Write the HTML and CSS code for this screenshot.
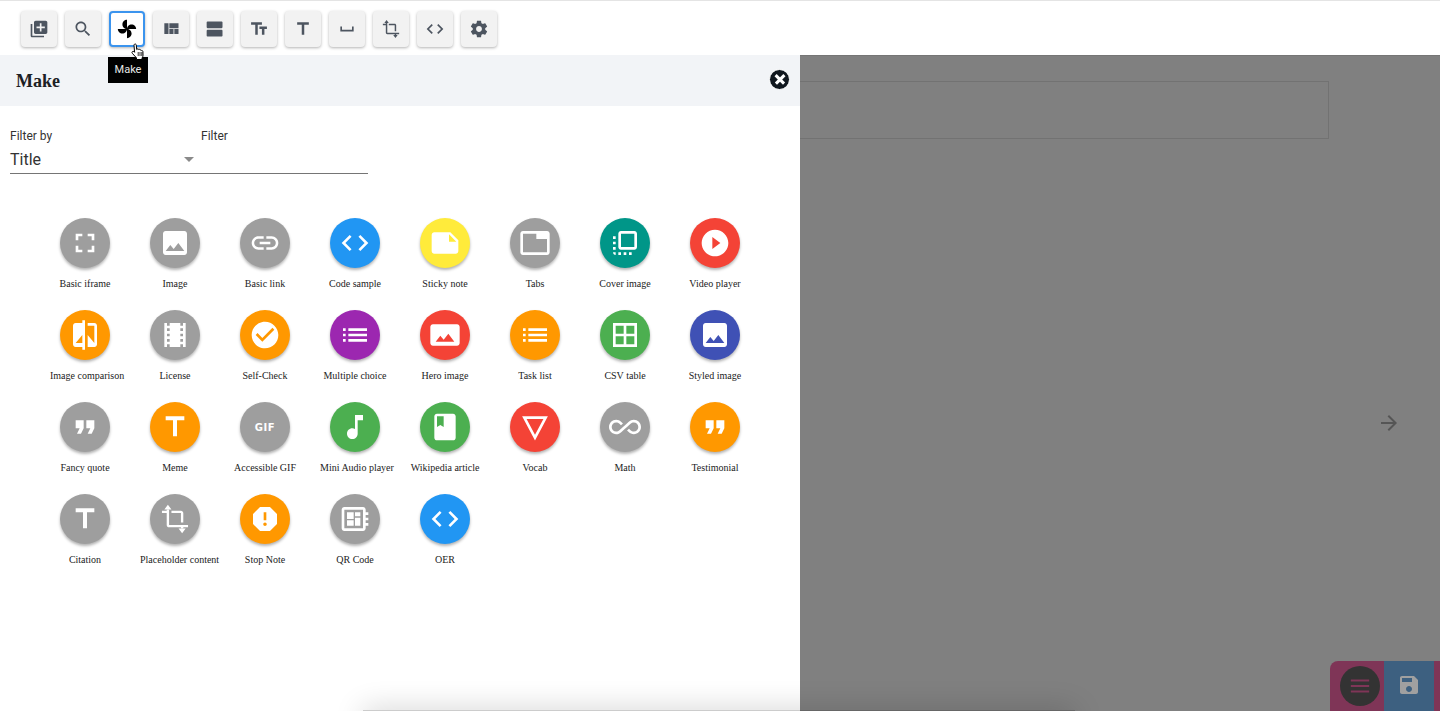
FILE: index.html
```html
<!DOCTYPE html>
<html>

<head>
    <meta name="viewport" content="width=device-width, initial-scale=1.0" />
    <title>Make</title>
    <link rel="stylesheet" href="styles.css">
</head>

<body>
    <svg class="defs" width="0" height="0">
        <symbol id="i-library" viewBox="0 0 24 24"><path d="M4 6H2v14c0 1.1.9 2 2 2h14v-2H4V6zm16-4H8c-1.1 0-2 .9-2 2v12c0 1.1.9 2 2 2h12c1.1 0 2-.9 2-2V4c0-1.1-.9-2-2-2zm-1 9h-4v4h-2v-4H9V9h4V5h2v4h4v2z"/></symbol>
        <symbol id="i-search" viewBox="0 0 24 24"><path d="M15.5 14h-.79l-.28-.27C15.41 12.59 16 11.11 16 9.5 16 5.91 13.09 3 9.5 3S3 5.91 3 9.5 5.91 16 9.5 16c1.61 0 3.09-.59 4.23-1.57l.27.28v.79l5 4.99L20.49 19l-4.99-5zm-6 0C7.01 14 5 11.99 5 9.5S7.01 5 9.5 5 14 7.01 14 9.5 11.99 14 9.5 14z"/></symbol>
        <symbol id="i-fan" viewBox="0 0 24 24"><path d="M12 12c0-3 2.5-5.5 5.5-5.5S23 9 23 12H12zm0 0c0 3-2.5 5.5-5.5 5.5S1 15 1 12h11zm0 0c-3 0-5.5-2.5-5.5-5.5S9 1 12 1v11zm0 0c3 0 5.5 2.5 5.5 5.5S15 23 12 23V12z"/></symbol>
        <symbol id="i-quilt" viewBox="0 0 24 24"><path d="M10 18h5v-6h-5v6zm-6 0h5V5H4v13zm12 0h5v-6h-5v6zM10 5v6h11V5H10z"/></symbol>
        <symbol id="i-stream" viewBox="0 0 24 24"><path d="M20 13H3c-.55 0-1 .45-1 1v6c0 .55.45 1 1 1h17c.55 0 1-.45 1-1v-6c0-.55-.45-1-1-1zm0-10H3c-.55 0-1 .45-1 1v6c0 .55.45 1 1 1h17c.55 0 1-.45 1-1V4c0-.55-.45-1-1-1z"/></symbol>
        <symbol id="i-fields" viewBox="0 0 24 24"><path d="M2.5 4v3h5v12h3V7h5V4h-13zm19 5h-9v3h3v7h3v-7h3V9z"/></symbol>
        <symbol id="i-title" viewBox="0 0 24 24"><path d="M5 4v3h5.5v12h3V7H19V4z"/></symbol>
        <symbol id="i-space" viewBox="0 0 24 24"><path d="M18 9v4H6V9H4v6h16V9z"/></symbol>
        <symbol id="i-crop" viewBox="-1.500 -1.500 27 27"><path d="M17 15h2V7c0-1.100-.9-2-2-2H9v2h8v8zM7 17V4H5v1H1v2h4v10c0 1.100.9 2 2 2h10v1h2v-1h4v-2H7z"/><path d="M6 0l3 4H3zM18 24l-3-4h6z"/></symbol>
        <symbol id="i-code" viewBox="0 0 24 24"><path d="M9.4 16.6L4.8 12l4.6-4.6L8 6l-6 6 6 6 1.4-1.4zm5.2 0l4.6-4.6-4.6-4.6L16 6l6 6-6 6-1.4-1.4z"/></symbol>
        <symbol id="i-gear" viewBox="0 0 24 24"><path d="M19.43 12.98c.04-.32.07-.64.07-.98s-.03-.66-.07-.98l2.11-1.65c.19-.15.24-.42.12-.64l-2-3.46c-.12-.22-.39-.3-.61-.22l-2.49 1c-.52-.4-1.08-.73-1.69-.98l-.38-2.65C14.46 2.18 14.25 2 14 2h-4c-.25 0-.46.18-.49.42l-.38 2.65c-.61.25-1.17.59-1.69.98l-2.49-1c-.23-.09-.49 0-.61.22l-2 3.46c-.13.22-.07.49.12.64l2.11 1.65c-.04.32-.07.65-.07.98s.03.66.07.98l-2.11 1.65c-.19.15-.24.42-.12.64l2 3.46c.12.22.39.3.61.22l2.49-1c.52.4 1.08.73 1.69.98l.38 2.65c.03.24.24.42.49.42h4c.25 0 .46-.18.49-.42l.38-2.65c.61-.25 1.17-.59 1.69-.98l2.49 1c.23.09.49 0 .61-.22l2-3.46c.12-.22.07-.49-.12-.64l-2.11-1.65zM12 15.5c-1.93 0-3.5-1.57-3.5-3.5s1.57-3.5 3.5-3.5 3.5 1.57 3.5 3.5-1.57 3.5-3.5 3.5z"/></symbol>
        <symbol id="i-full" viewBox="0 0 24 24"><path d="M7 14H5v5h5v-2H7v-3zm-2-4h2V7h3V5H5v5zm12 7h-3v2h5v-5h-2v3zM14 5v2h3v3h2V5h-5z"/></symbol>
        <symbol id="i-image" viewBox="0 0 24 24"><path d="M21 19V5c0-1.1-.9-2-2-2H5c-1.1 0-2 .9-2 2v14c0 1.1.9 2 2 2h14c1.1 0 2-.9 2-2zM8.5 13.5l2.5 3.01L14.5 12l4.5 6H5l3.5-4.5z"/></symbol>
        <symbol id="i-link" viewBox="0 0 24 24"><path d="M3.9 12c0-1.71 1.39-3.1 3.1-3.1h4V7H7c-2.76 0-5 2.24-5 5s2.24 5 5 5h4v-1.9H7c-1.71 0-3.1-1.39-3.1-3.1zM8 13h8v-2H8v2zm9-6h-4v1.9h4c1.71 0 3.1 1.39 3.1 3.1s-1.39 3.1-3.1 3.1h-4V17h4c2.76 0 5-2.24 5-5s-2.24-5-5-5z"/></symbol>
        <symbol id="i-note" viewBox="0 0 24 24"><path d="M22 10l-6-6H4c-1.1 0-2 .9-2 2v12.01c0 1.1.9 1.99 2 1.99l16-.01c1.1 0 2-.89 2-1.99v-8zm-7-4.5l5.5 5.5H15V5.5z"/></symbol>
        <symbol id="i-tab" viewBox="0 0 24 24"><path d="M21 3H3c-1.1 0-2 .9-2 2v14c0 1.1.9 2 2 2h18c1.1 0 2-.9 2-2V5c0-1.1-.9-2-2-2zm0 16H3V5h10v4h8v10z"/></symbol>
        <symbol id="i-cover" viewBox="0 0 24 24"><path d="M3 13h2v-2H3v2zm0 4h2v-2H3v2zm2 4v-2H3c0 1.1.89 2 2 2zM3 9h2V7H3v2zm12 12h2v-2h-2v2zm4-18H9c-1.11 0-2 .9-2 2v10c0 1.1.89 2 2 2h10c1.1 0 2-.9 2-2V5c0-1.1-.9-2-2-2zm0 12H9V5h10v10zm-8 6h2v-2h-2v2zm-4 0h2v-2H7v2z"/></symbol>
        <symbol id="i-play" viewBox="0 0 24 24"><path d="M12 2C6.48 2 2 6.48 2 12s4.48 10 10 10 10-4.48 10-10S17.52 2 12 2zm-2 14.5v-9l6 4.5-6 4.5z"/></symbol>
        <symbol id="i-compare" viewBox="0 0 24 24"><path d="M10 3H5c-1.1 0-2 .9-2 2v14c0 1.1.9 2 2 2h5v2h2V1h-2v2zm0 15H5l5-6v6zm9-15h-5v2h5v13l-5-6v9h5c1.1 0 2-.9 2-2V5c0-1.1-.9-2-2-2z"/></symbol>
        <symbol id="i-film" viewBox="0 0 24 24"><path d="M18 3v2h-2V3H8v2H6V3H4v18h2v-2h2v2h8v-2h2v2h2V3h-2zM8 17H6v-2h2v2zm0-4H6v-2h2v2zm0-4H6V7h2v2zm10 8h-2v-2h2v2zm0-4h-2v-2h2v2zm0-4h-2V7h2v2z"/></symbol>
        <symbol id="i-check" viewBox="0 0 24 24"><path d="M12 2C6.48 2 2 6.48 2 12s4.48 10 10 10 10-4.48 10-10S17.52 2 12 2zm-2 15l-5-5 1.41-1.41L10 14.17l7.59-7.59L19 8l-9 9z"/></symbol>
        <symbol id="i-list" viewBox="0 0 24 24"><path d="M3 13h2v-2H3v2zm0 4h2v-2H3v2zm0-8h2V7H3v2zm4 4h14v-2H7v2zm0 4h14v-2H7v2zM7 7v2h14V7H7z"/></symbol>
        <symbol id="i-hero" viewBox="0 0 24 24"><path d="M23 18V6c0-1.1-.9-2-2-2H3c-1.1 0-2 .9-2 2v12c0 1.1.9 2 2 2h18c1.1 0 2-.9 2-2zM8.5 12.5l2.5 3.01L14.5 11l4.5 6H5l3.5-4.5z"/></symbol>
        <symbol id="i-table" viewBox="0 0 24 24"><path fill-rule="evenodd" d="M3 3h18v18H3zM5 5v6h6V5zM13 5v6h6V5zM5 13v6h6v-6zM13 13v6h6v-6z"/></symbol>
        <symbol id="i-quote" viewBox="0 0 24 24"><path d="M6 17h3l2-4V7H5v6h3zm8 0h3l2-4V7h-6v6h3z"/></symbol>
        <symbol id="i-music" viewBox="0 0 24 24"><path d="M12 3v10.55c-.59-.34-1.27-.55-2-.55-2.21 0-4 1.79-4 4s1.79 4 4 4 4-1.79 4-4V7h4V3h-6z"/></symbol>
        <symbol id="i-book" viewBox="0 0 24 24"><path d="M18 2H6c-1.1 0-2 .9-2 2v16c0 1.1.9 2 2 2h12c1.1 0 2-.9 2-2V4c0-1.1-.9-2-2-2zM6 4h5v8l-2.5-1.5L6 12V4z"/></symbol>
        <symbol id="i-vocab" viewBox="0 0 24 24"><path fill="none" stroke="currentColor" stroke-width="2" d="M4 5h16l-8 15z"/></symbol>
        <symbol id="i-infinity" viewBox="0 0 24 24"><path d="M18.6 6.62c-1.44 0-2.8.56-3.77 1.53L12 10.66 10.48 12h.01L7.8 14.39c-.64.64-1.49.99-2.4.99-1.87 0-3.39-1.51-3.39-3.38S3.53 8.62 5.4 8.62c.91 0 1.76.35 2.44 1.03l1.13 1 1.51-1.34L9.22 8.2C8.2 7.18 6.84 6.62 5.4 6.62 2.42 6.62 0 9.04 0 12s2.42 5.38 5.4 5.38c1.44 0 2.8-.56 3.77-1.53l2.83-2.5.01.01L13.52 12h-.01l2.69-2.39c.64-.64 1.49-.99 2.4-.99 1.87 0 3.39 1.51 3.39 3.38s-1.52 3.38-3.39 3.38c-.9 0-1.76-.35-2.44-1.03l-1.14-1.01-1.51 1.34 1.27 1.12c1.02 1.01 2.37 1.57 3.82 1.57 2.98 0 5.4-2.41 5.4-5.38s-2.42-5.37-5.4-5.37z"/></symbol>
        <symbol id="i-stop" viewBox="0 0 24 24"><path d="M15.73 3H8.27L3 8.27v7.46L8.27 21h7.46L21 15.73V8.27L15.73 3zM12 17.3c-.72 0-1.3-.58-1.3-1.3 0-.72.58-1.3 1.3-1.3.72 0 1.3.58 1.3 1.3 0 .72-.58 1.3-1.3 1.3zm1-4.3h-2V7h2v6z"/></symbol>
        <symbol id="i-board" viewBox="0 0 24 24"><path d="M22 9V7h-2V5c0-1.1-.9-2-2-2H4c-1.1 0-2 .9-2 2v14c0 1.1.9 2 2 2h14c1.1 0 2-.9 2-2v-2h2v-2h-2v-2h2v-2h-2V9h2zm-4 10H4V5h14v14zM6 13h5v4H6zm6-6h4v3h-4zM6 7h5v5H6zm6 4h4v6h-4z"/></symbol>
        <symbol id="i-save" viewBox="0 0 24 24"><path d="M17 3H5c-1.11 0-2 .9-2 2v14c0 1.1.89 2 2 2h14c1.1 0 2-.9 2-2V7l-4-4zm-5 16c-1.66 0-3-1.34-3-3s1.34-3 3-3 3 1.34 3 3-1.34 3-3 3zm3-10H5V5h10v4z"/></symbol>
        <symbol id="i-arrow" viewBox="0 0 24 24"><path d="M12 4l-1.41 1.41L16.17 11H4v2h12.17l-5.58 5.59L12 20l8-8z"/></symbol>
        <symbol id="i-menu" viewBox="0 0 24 24"><path d="M2 5h20v2H2zM2 11h20v2H2zM2 17h20v2H2z"/></symbol>
    </svg>

    <div class="toolbar">
        <button class="tool"><svg><use href="#i-library"/></svg></button>
        <button class="tool"><svg><use href="#i-search"/></svg></button>
        <button class="tool active"><svg><use href="#i-fan"/></svg></button>
        <button class="tool"><svg><use href="#i-quilt"/></svg></button>
        <button class="tool"><svg><use href="#i-stream"/></svg></button>
        <button class="tool"><svg><use href="#i-fields"/></svg></button>
        <button class="tool"><svg><use href="#i-title"/></svg></button>
        <button class="tool"><svg><use href="#i-space"/></svg></button>
        <button class="tool"><svg><use href="#i-crop"/></svg></button>
        <button class="tool"><svg><use href="#i-code"/></svg></button>
        <button class="tool"><svg><use href="#i-gear"/></svg></button>
    </div>

    <div class="stage">
        <div class="panel">
            <div class="panel-head">
                <h2>Make</h2>
                <div class="close"></div>
            </div>

            <div class="filters">
                <div class="filter-by">
                    <label>Filter by</label>
                    <div class="value">Title<span class="caret"></span></div>
                </div>
                <div class="filter-text">
                    <label>Filter</label>
                    <div class="value"></div>
                </div>
            </div>

            <div class="grid">
                <div class="item"><div class="circle grey"><svg><use href="#i-full"/></svg></div><p>Basic iframe</p></div>
                <div class="item"><div class="circle grey"><svg><use href="#i-image"/></svg></div><p>Image</p></div>
                <div class="item"><div class="circle grey"><svg><use href="#i-link"/></svg></div><p>Basic link</p></div>
                <div class="item"><div class="circle blue"><svg><use href="#i-code"/></svg></div><p>Code sample</p></div>
                <div class="item"><div class="circle yellow"><svg><use href="#i-note"/></svg></div><p>Sticky note</p></div>
                <div class="item"><div class="circle grey"><svg><use href="#i-tab"/></svg></div><p>Tabs</p></div>
                <div class="item"><div class="circle teal"><svg><use href="#i-cover"/></svg></div><p>Cover image</p></div>
                <div class="item"><div class="circle red"><svg><use href="#i-play"/></svg></div><p>Video player</p></div>

                <div class="item"><div class="circle orange"><svg><use href="#i-compare"/></svg></div><p>Image comparison</p></div>
                <div class="item"><div class="circle grey"><svg><use href="#i-film"/></svg></div><p>License</p></div>
                <div class="item"><div class="circle orange"><svg><use href="#i-check"/></svg></div><p>Self-Check</p></div>
                <div class="item"><div class="circle purple"><svg><use href="#i-list"/></svg></div><p>Multiple choice</p></div>
                <div class="item"><div class="circle red"><svg><use href="#i-hero"/></svg></div><p>Hero image</p></div>
                <div class="item"><div class="circle orange"><svg><use href="#i-list"/></svg></div><p>Task list</p></div>
                <div class="item"><div class="circle green"><svg><use href="#i-table"/></svg></div><p>CSV table</p></div>
                <div class="item"><div class="circle indigo"><svg><use href="#i-image"/></svg></div><p>Styled image</p></div>

                <div class="item"><div class="circle grey"><svg><use href="#i-quote"/></svg></div><p>Fancy quote</p></div>
                <div class="item"><div class="circle orange"><svg><use href="#i-title"/></svg></div><p>Meme</p></div>
                <div class="item"><div class="circle grey"><span class="gif">GIF</span></div><p>Accessible GIF</p></div>
                <div class="item"><div class="circle green"><svg><use href="#i-music"/></svg></div><p>Mini Audio player</p></div>
                <div class="item"><div class="circle green"><svg><use href="#i-book"/></svg></div><p>Wikipedia article</p></div>
                <div class="item"><div class="circle red"><svg><use href="#i-vocab"/></svg></div><p>Vocab</p></div>
                <div class="item"><div class="circle grey"><svg><use href="#i-infinity"/></svg></div><p>Math</p></div>
                <div class="item"><div class="circle orange"><svg><use href="#i-quote"/></svg></div><p>Testimonial</p></div>

                <div class="item"><div class="circle grey"><svg><use href="#i-title"/></svg></div><p>Citation</p></div>
                <div class="item"><div class="circle grey"><svg><use href="#i-crop"/></svg></div><p>Placeholder content</p></div>
                <div class="item"><div class="circle orange"><svg><use href="#i-stop"/></svg></div><p>Stop Note</p></div>
                <div class="item"><div class="circle grey"><svg><use href="#i-board"/></svg></div><p>QR Code</p></div>
                <div class="item"><div class="circle blue"><svg><use href="#i-code"/></svg></div><p>OER</p></div>
            </div>
        </div>

        <div class="scrim">
            <div class="outline"></div>
            <svg class="next"><use href="#i-arrow"/></svg>
            <div class="fabs">
                <div class="fab-menu"><div class="fab-dot"><svg><use href="#i-menu"/></svg></div></div>
                <div class="fab-save"><svg><use href="#i-save"/></svg></div>
                <div class="fab-end"></div>
            </div>
        </div>
    </div>

    <div class="tooltip">Make</div>
    <svg class="cursor" viewBox="0 0 16 18">
        <path d="M4.500 1.200c.8-.5 1.700 0 1.800.9l.4 4.400.6-.5c.6-.2 1.200 0 1.400.5.5-.3 1.200-.2 1.500.4.6-.2 1.200 0 1.400.6.6-.1 1.200.3 1.300 1l.1 3.700c0 1.200-.4 2.100-1 2.900v1.400H6.500v-1.600L2.300 10.300c-.5-.6-.4-1.300.1-1.700.5-.4 1.200-.3 1.600.1l.6.6-.6-6.900c0-.5.1-.9.500-1.200z" fill="#fff" stroke="#000" stroke-width="1"/>
        <path d="M8.200 9v4M10 9v4M11.800 9v4" stroke="#000" stroke-width=".8"/>
    </svg>
    <div class="edge-shadow"></div>
</body>

</html>
```
FILE: styles.css
```css
html,
body {
    margin: 0;
    height: 711px;
    overflow: hidden;
    background: #fff;
}

body {
    position: relative;
    font-family: "Liberation Serif", serif;
    color: #222;
}

.defs {
    position: absolute;
}

svg {
    fill: currentColor;
}

.toolbar {
    display: flex;
    gap: 8px;
    height: 55px;
    box-sizing: border-box;
    padding: 10px 21px 0;
    border-top: 1px solid #e4e4e4;
}

.tool {
    display: flex;
    align-items: center;
    justify-content: center;
    width: 36px;
    height: 36px;
    padding: 0;
    border: none;
    border-radius: 4px;
    background: #f2f2f2;
    color: #4d5560;
    box-shadow: 0 1px 3px rgba(0, 0, 0, 0.3);
}

.tool svg {
    width: 20px;
    height: 20px;
}

.tool.active {
    box-sizing: border-box;
    width: 36px;
    background: #fff;
    color: #000;
    border: 2px solid #3b94ee;
}

.stage {
    display: flex;
    height: 656px;
}

.panel {
    width: 800px;
    background: #fff;
}

.panel-head {
    display: flex;
    align-items: center;
    justify-content: space-between;
    height: 51px;
    box-sizing: border-box;
    padding: 2px 10px 0 16px;
    background: #f2f4f7;
}

.panel-head h2 {
    margin: 0;
    font-size: 18px;
    font-weight: bold;
    color: #1c2024;
}

.close {
    position: relative;
    box-sizing: border-box;
    width: 21px;
    height: 21px;
    border-radius: 50%;
    background: #11181f;
    border: 1px solid #fff;
    margin-top: -4px;
}

.close::before,
.close::after {
    content: "";
    position: absolute;
    left: 3.500px;
    top: 8.250px;
    width: 12px;
    height: 2.500px;
    background: #fff;
    transform: rotate(45deg);
}

.close::after {
    transform: rotate(-45deg);
}

.filters {
    display: flex;
    margin: 23px 0 0 10px;
    width: 358px;
    font-family: Roboto, sans-serif;
}

.filters label {
    display: block;
    font-size: 12px;
    line-height: 15px;
    color: #333;
    margin-bottom: 6px;
}

.filter-by {
    width: 186px;
}

.filter-text {
    flex: 1;
}

.filter-text label {
    padding-left: 5px;
}

.value {
    position: relative;
    height: 23px;
    font-size: 16px;
    line-height: 20px;
    color: #333;
    border-bottom: 1px solid #757575;
}

.caret {
    position: absolute;
    right: 2px;
    top: 7px;
    border-left: 5px solid transparent;
    border-right: 5px solid transparent;
    border-top: 5px solid #8a8a8a;
}

.grid {
    display: grid;
    grid-template-columns: repeat(8, 70px);
    column-gap: 20px;
    row-gap: 14px;
    margin: 44px 0 0 50px;
}

.item {
    text-align: center;
    height: 78px;
}

.item p {
    margin: 9px 0 0;
    font-size: 10px;
    line-height: 13px;
    white-space: nowrap;
}

.circle {
    display: flex;
    align-items: center;
    justify-content: center;
    width: 50px;
    height: 50px;
    margin: 0 auto;
    border-radius: 50%;
    color: #fff;
    box-shadow: 0 2px 3px rgba(0, 0, 0, 0.3);
}

.circle svg {
    width: 32px;
    height: 32px;
}

.gif {
    font-family: "DejaVu Sans", sans-serif;
    font-weight: bold;
    font-size: 10px;
    letter-spacing: 0.5px;
}

.grey { background: #9e9e9e; }
.blue { background: #2196f3; }
.yellow { background: #ffeb3b; }
.teal { background: #009688; }
.red { background: #f44336; }
.orange { background: #ff9800; }
.purple { background: #9c27b0; }
.green { background: #4caf50; }
.indigo { background: #3f51b5; }

.scrim {
    position: relative;
    flex: 1;
    background: #808080;
    border-top: 1px solid #757575;
}

.outline {
    width: 528px;
    height: 56px;
    margin-top: 25px;
    border-top: 1px solid #727272;
    border-bottom: 1px solid #727272;
    border-right: 1px solid #727272;
}

.next {
    position: absolute;
    left: 577px;
    top: 355px;
    width: 24px;
    height: 24px;
    color: #555;
}

.fabs {
    position: absolute;
    right: 0;
    bottom: 0;
    display: flex;
    height: 50px;
    width: 110px;
}

.fab-menu {
    width: 54px;
    background: #7f3557;
    border-top-left-radius: 8px;
    padding: 5px 0 0 10px;
    box-sizing: border-box;
}

.fab-dot {
    display: flex;
    align-items: center;
    justify-content: center;
    width: 40px;
    height: 40px;
    border-radius: 50%;
    background: #333;
    color: #7f3557;
}

.fab-dot svg {
    width: 22px;
    height: 22px;
}

.fab-save {
    display: flex;
    justify-content: center;
    width: 50px;
    padding-top: 12px;
    box-sizing: border-box;
    background: #3d6080;
    color: #a0a0a0;
}

.fab-save svg {
    width: 24px;
    height: 24px;
}

.fab-end {
    flex: 1;
    background: #7f3557;
}

.tooltip {
    position: absolute;
    left: 108px;
    top: 57px;
    width: 40px;
    height: 26px;
    background: #000;
    color: #e8e8e8;
    font-family: Roboto, sans-serif;
    font-size: 11px;
    line-height: 26px;
    text-align: center;
}

.cursor {
    position: absolute;
    left: 130px;
    top: 43px;
    width: 16px;
    height: 18px;
}

.edge-shadow {
    position: absolute;
    left: 363px;
    top: 710px;
    width: 712px;
    height: 20px;
    background: rgba(0, 0, 0, 0.2);
    box-shadow: 0 0 30px rgba(0, 0, 0, 0.2);
}
```
